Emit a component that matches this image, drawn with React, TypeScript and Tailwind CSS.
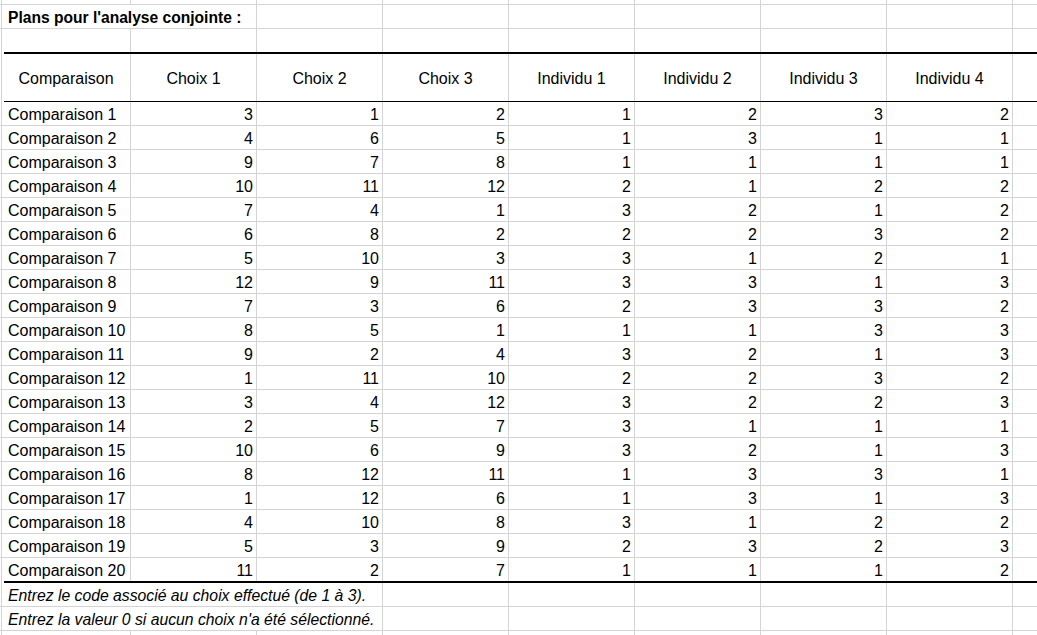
import React from "react";

const G = "border-[#d4d4d4]";

const data: number[][] = [
  [3, 1, 2, 1, 2, 3, 2],
  [4, 6, 5, 1, 3, 1, 1],
  [9, 7, 8, 1, 1, 1, 1],
  [10, 11, 12, 2, 1, 2, 2],
  [7, 4, 1, 3, 2, 1, 2],
  [6, 8, 2, 2, 2, 3, 2],
  [5, 10, 3, 3, 1, 2, 1],
  [12, 9, 11, 3, 3, 1, 3],
  [7, 3, 6, 2, 3, 3, 2],
  [8, 5, 1, 1, 1, 3, 3],
  [9, 2, 4, 3, 2, 1, 3],
  [1, 11, 10, 2, 2, 3, 2],
  [3, 4, 12, 3, 2, 2, 3],
  [2, 5, 7, 3, 1, 1, 1],
  [10, 6, 9, 3, 2, 1, 3],
  [8, 12, 11, 1, 3, 3, 1],
  [1, 12, 6, 1, 3, 1, 3],
  [4, 10, 8, 3, 1, 2, 2],
  [5, 3, 9, 2, 3, 2, 3],
  [11, 2, 7, 1, 1, 1, 2],
];

const headers = ["Choix 1", "Choix 2", "Choix 3", "Individu 1", "Individu 2", "Individu 3", "Individu 4"];

function Lead() {
  return <div className={`w-[2px] shrink-0 border-r ${G}`} />;
}

function Empty({ n }: { n: number }) {
  return (
    <>
      {Array.from({ length: n }).map((_, i) => (
        <div key={i} className={`w-[126px] shrink-0 border-r ${G}`} />
      ))}
    </>
  );
}

function Rule({ h }: { h: string }) {
  return (
    <div className={`flex ${h}`}>
      <div className="w-[4px] shrink-0 flex">
        <div className={`w-[2px] border-r ${G}`} />
      </div>
      <div className="flex-1 bg-black" />
    </div>
  );
}

function BlankRow({ h, border = true }: { h: string; border?: boolean }) {
  return (
    <div className={`flex ${h} ${border ? `border-b ${G}` : ""}`}>
      <Lead />
      <div className={`w-[129px] shrink-0 border-r ${G}`} />
      <Empty n={7} />
      <div className="flex-1" />
    </div>
  );
}

export default function App() {
  return (
    <div
      className="w-[1037px] h-[635px] overflow-hidden bg-white text-black text-[16px] leading-none"
      style={{ fontFamily: '"Liberation Sans", Arial, sans-serif' }}
    >
      <BlankRow h="h-[5px]" />
      {/* title row */}
      <div className={`flex h-[24px] border-b ${G}`}>
        <Lead />
        <div className={`w-[255px] shrink-0 border-r ${G} flex items-center pl-[6px] pt-[2px] font-bold text-[15.6px] whitespace-nowrap`}>
          Plans pour l'analyse conjointe :
        </div>
        <Empty n={6} />
        <div className="flex-1" />
      </div>
      <BlankRow h="h-[23px]" border={false} />
      <Rule h="h-[2px]" />
      {/* header row */}
      <div className="flex h-[47px]">
        <Lead />
        <div className={`w-[129px] shrink-0 border-r ${G} flex items-center justify-center pt-[2px]`}>Comparaison</div>
        {headers.map((t) => (
          <div key={t} className={`w-[126px] shrink-0 border-r ${G} flex items-center justify-center pt-[2px]`}>
            {t}
          </div>
        ))}
        <div className="flex-1" />
      </div>
      <Rule h="h-[1px]" />
      {data.map((row, i) => (
        <div key={i} className={`flex ${i === data.length - 1 ? "h-[23px]" : `h-[24px] border-b ${G}`}`}>
          <Lead />
          <div className={`w-[129px] shrink-0 border-r ${G} flex items-center pl-[6px] pt-[2px] whitespace-nowrap`}>
            Comparaison {i + 1}
          </div>
          {row.map((v, j) => (
            <div key={j} className={`w-[126px] shrink-0 border-r ${G} flex items-center justify-end pr-[3px] pt-[2px]`}>
              {v}
            </div>
          ))}
          <div className="flex-1" />
        </div>
      ))}
      <Rule h="h-[2px]" />
      {[
        "Entrez le code associé au choix effectué (de 1 à 3).",
        "Entrez la valeur 0 si aucun choix n'a été sélectionné.",
      ].map((t) => (
        <div key={t} className={`flex h-[24px] border-b ${G}`}>
          <Lead />
          <div className={`w-[381px] shrink-0 border-r ${G} flex items-center pl-[6px] pt-[2px] italic text-[15.75px] whitespace-nowrap`}>
            {t}
          </div>
          <Empty n={5} />
          <div className="flex-1" />
        </div>
      ))}
      <BlankRow h="h-[10px]" />
    </div>
  );
}
